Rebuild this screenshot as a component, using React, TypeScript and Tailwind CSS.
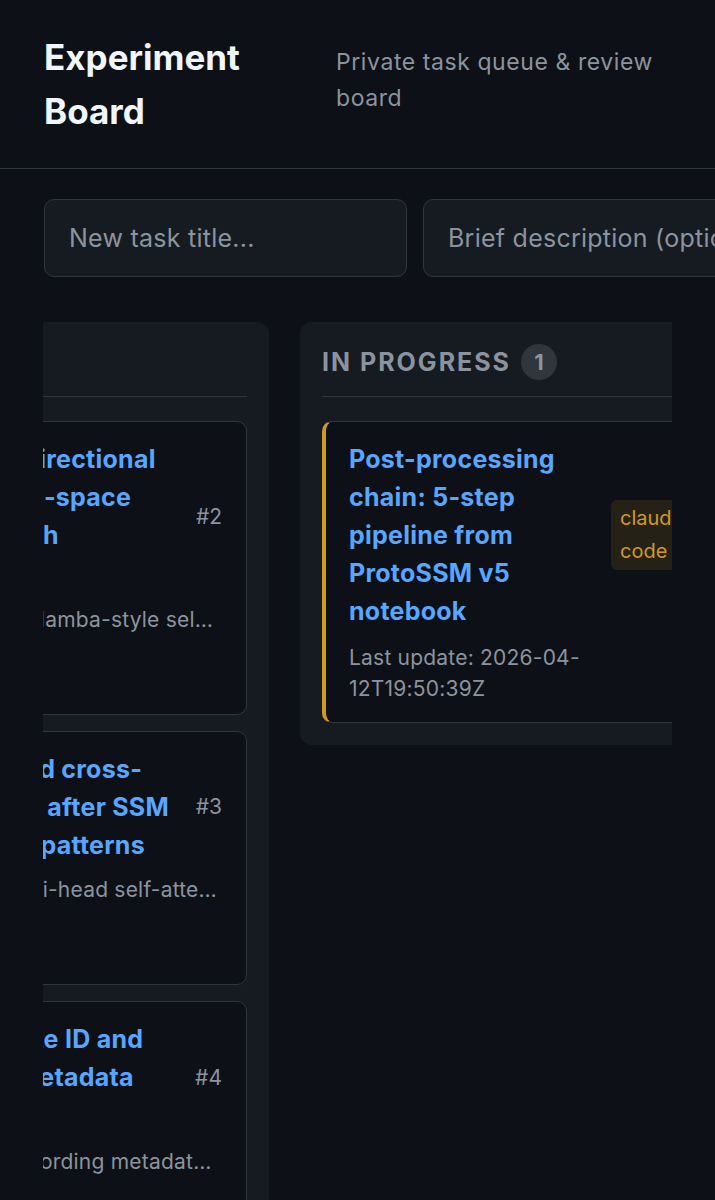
import { useLayoutEffect, useRef } from "react";

type Task = {
  id: number;
  title: string;
  desc: string;
  chip?: string;
};

const queued: Task[] = [
  {
    id: 2,
    title: "Implement bidirectional selective state-space encoder branch",
    desc: "Stack two-pass Mamba-style selective scan blocks over frame embeddings",
    chip: "model",
  },
  {
    id: 3,
    title: "Add multi-head cross-attention layer after SSM for sequential patterns",
    desc: "Inject 4 layer multi-head self-attention block between SSM and classifier",
  },
  {
    id: 4,
    title: "Incorporate site ID and deployment metadata",
    desc: "Feed site ID + recording metadata as extra conditioning features",
    chip: "data",
  },
];

function QueuedCard({ task }: { task: Task }) {
  return (
    <div className="rounded-[10px] border border-[#30363d] bg-[#0d1117] px-6 py-[18px]">
      <div className="flex items-center gap-4">
        <div className="min-w-0 flex-1">
          <div className="text-[25px] font-bold leading-[38px] tracking-[0.01em] text-[#58a6ff]">
            {task.title}
          </div>
          {task.chip && (
            <div className="mt-[6px] flex h-[34px] items-center">
              <span className="rounded-md bg-[#21262d] px-2 text-[18px] leading-[30px] text-[#8b949e]">
                {task.chip}
              </span>
            </div>
          )}
        </div>
        <span className="shrink-0 text-[21px] leading-[30px] text-[#8b949e]">#{task.id}</span>
      </div>
      <p className="mt-[10px] truncate text-[21px] leading-[32px] tracking-[0.01em] text-[#8b949e]">
        {task.desc}
      </p>
      <div className="mt-4 flex h-[44px] items-center gap-2">
        <span className="rounded-md border border-[#30363d] bg-[#21262d] px-3 text-[18px] leading-[40px] text-[#c9d1d9]">
          Start
        </span>
      </div>
    </div>
  );
}

function ColumnHeader({ label, count }: { label: string; count: number }) {
  return (
    <div className="flex items-center gap-[10px] border-b border-[#30363d] pb-4">
      <span className="text-[25px] font-bold uppercase leading-[36px] tracking-[0.08em] text-[#8b949e]">
        {label}
      </span>
      <span className="flex h-[36px] w-[36px] items-center justify-center rounded-full bg-[#30363d] text-[22px] font-bold text-[#8b949e]">
        {count}
      </span>
    </div>
  );
}

export default function App() {
  const boardRef = useRef<HTMLDivElement>(null);
  useLayoutEffect(() => {
    if (boardRef.current) boardRef.current.scrollLeft = 228;
  }, []);

  return (
    <div className="min-h-[1200px] w-full overflow-hidden bg-[#0d1117] font-[Inter,sans-serif] text-[#e6edf3]">
      <header className="flex items-baseline gap-[40px] border-b border-[#30363d] px-[44px] py-[30px]">
        <h1 className="w-[252px] shrink-0 text-[35px] font-bold leading-[54px] text-[#f0f6fc]">
          Experiment Board
        </h1>
        <p className="text-[23px] leading-[36px] tracking-[0.025em] text-[#8b949e]">
          Private task queue &amp; review board
        </p>
      </header>

      <div className="flex gap-4 px-[44px] pt-[30px]">
        <input
          placeholder="New task title..."
          className="h-[78px] w-[363px] shrink-0 rounded-[10px] border border-[#30363d] bg-[#161b22] px-6 text-[25px] tracking-[0.01em] text-[#e6edf3] outline-none placeholder:text-[#8b949e]"
        />
        <input
          placeholder="Brief description (optional)"
          className="h-[78px] w-[363px] shrink-0 rounded-[10px] border border-[#30363d] bg-[#161b22] px-6 text-[25px] tracking-[0.01em] text-[#e6edf3] outline-none placeholder:text-[#8b949e]"
        />
      </div>

      <div ref={boardRef} className="ml-[43px] mt-[45px] w-[629px] overflow-hidden">
        <div className="flex w-max items-start gap-[31px]">
          <section className="w-[454px] rounded-xl bg-[#161b22] p-[22px]">
            <ColumnHeader label="Queued" count={3} />
            <div className="mt-6 flex flex-col gap-4">
              {queued.map((t) => (
                <QueuedCard key={t.id} task={t} />
              ))}
            </div>
          </section>

          <section className="w-[454px] rounded-xl bg-[#161b22] p-[22px]">
            <ColumnHeader label="In progress" count={1} />
            <div className="mt-6 flex flex-col gap-4">
              <div className="rounded-[10px] border border-l-4 border-[#30363d] border-l-[#d29922] bg-[#0d1117] py-[18px] pl-[23px] pr-6">
                <div className="flex items-center gap-4">
                  <div className="min-w-0 flex-1 text-[25px] font-bold leading-[38px] tracking-[0.01em] text-[#58a6ff]">
                    Post-processing chain: 5-step pipeline from ProtoSSM v5 notebook
                  </div>
                  <span className="w-[96px] shrink-0 rounded-md bg-[#262116] px-[9px] py-[2px] text-[20px] leading-[33px] text-[#d29922]">
                    claude code
                  </span>
                </div>
                <p className="mt-3 text-[21px] leading-[31px] tracking-[0.01em] text-[#8b949e]">
                  Last update: 2026-04-12T19:50:39Z
                </p>
              </div>
            </div>
          </section>
        </div>
      </div>
    </div>
  );
}
